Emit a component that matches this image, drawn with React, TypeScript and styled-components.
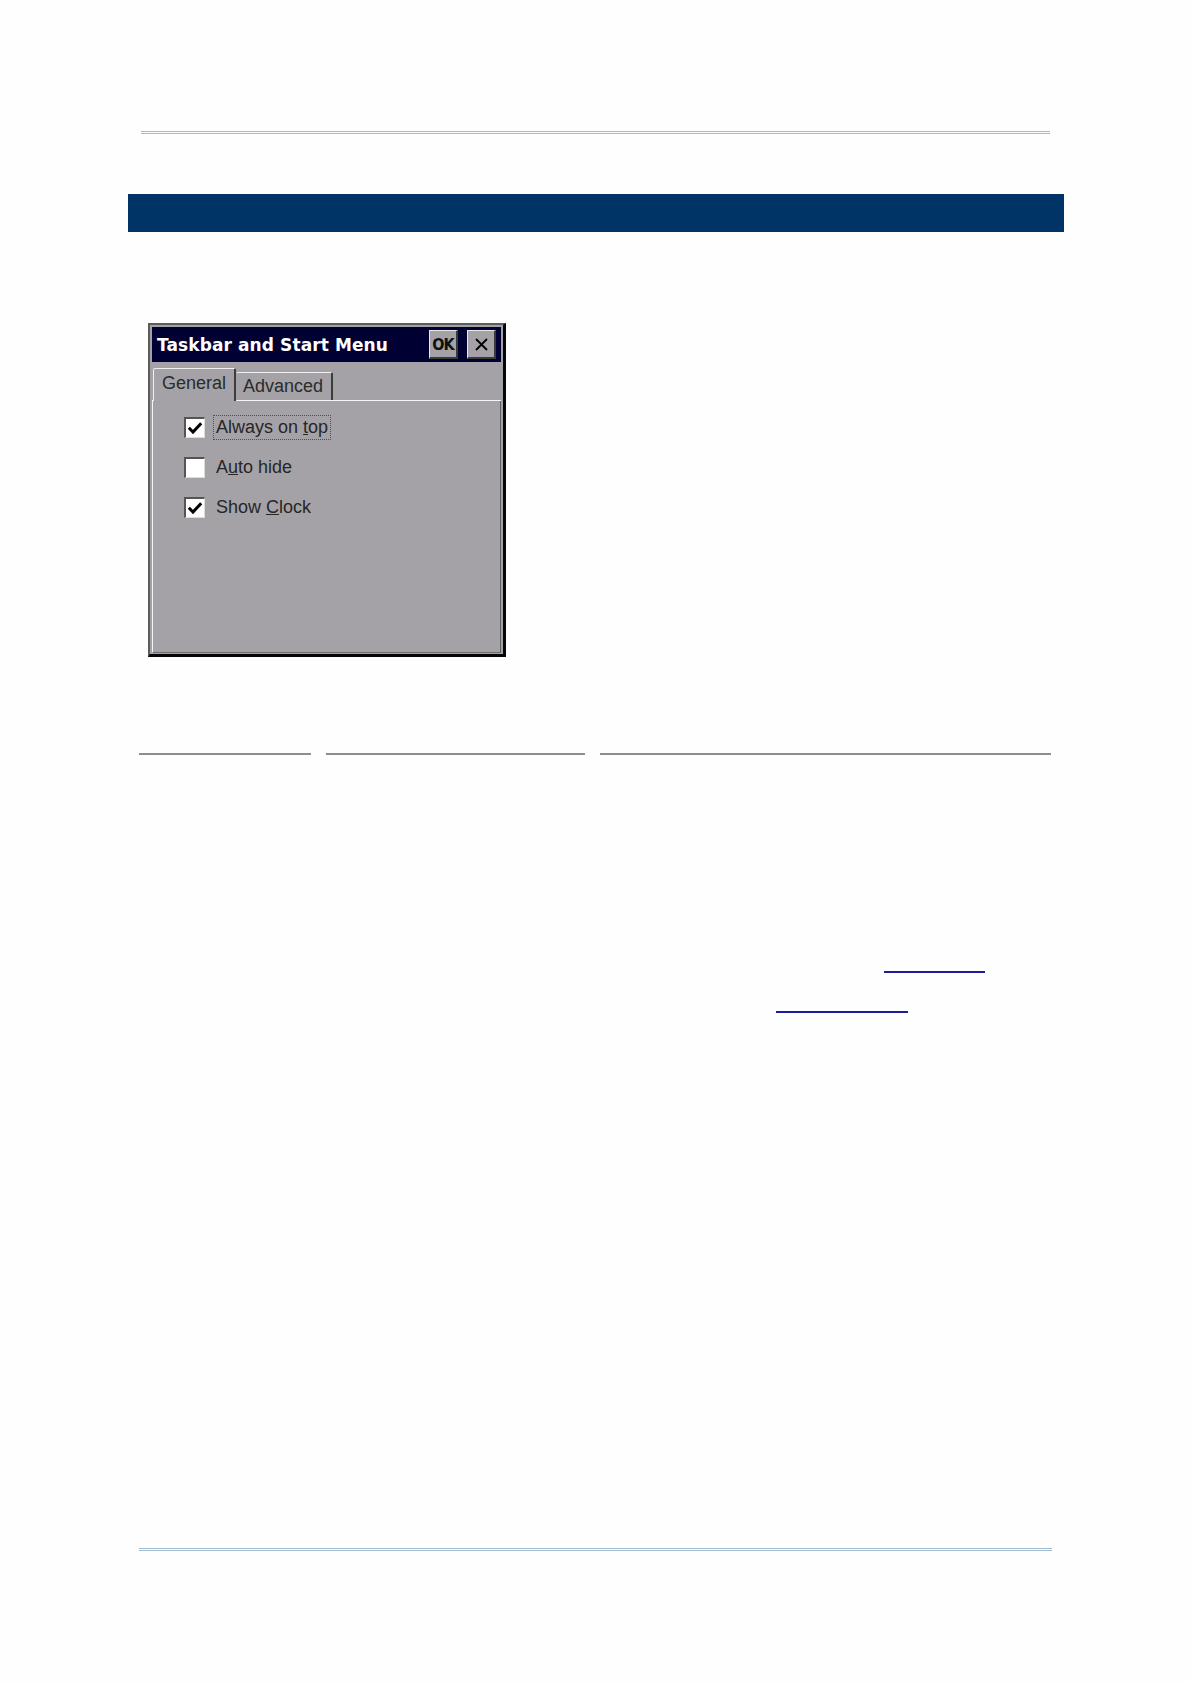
import React from "react";
import styled, { createGlobalStyle } from "styled-components";

const GlobalStyle = createGlobalStyle`
  html, body {
    margin: 0;
    padding: 0;
    background: #fefefe;
  }
  body {
    font-family: "Liberation Sans", Arial, sans-serif;
  }
`;

const Page = styled.div`
  width: 1190px;
  min-height: 1684px;
  display: flex;
  flex-direction: column;
  align-items: flex-start;
  overflow: hidden;
`;

const DoubleRule = styled.div<{ $top: number; $left: number; $width: number }>`
  margin-top: ${(p) => p.$top}px;
  margin-left: ${(p) => p.$left}px;
  width: ${(p) => p.$width}px;
  height: 1px;
  border-top: 1px solid #a2bacb;
  border-bottom: 1px solid #a2bacb;
`;

const Banner = styled.div`
  margin-top: 60px;
  margin-left: 128px;
  width: 936px;
  height: 38px;
  background: #003466;
`;

const Dialog = styled.div`
  margin-top: 91px;
  margin-left: 148px;
  width: 358px;
  height: 334px;
  box-sizing: border-box;
  border-style: solid;
  border-width: 2px 3px 3px 2px;
  border-color: #5c5c5c #050505 #050505 #5c5c5c;
  padding: 2px 2px 1px 2px;
  background: #a4a2a6;
  display: flex;
  flex-direction: column;
`;

const TitleBar = styled.div`
  height: 35px;
  background: #000033;
  display: flex;
  align-items: center;
  padding: 0 5px 0 5px;
  gap: 9px;
`;

const Title = styled.div`
  flex: 1;
  color: #ffffff;
  font-family: "DejaVu Sans", Verdana, sans-serif;
  font-weight: bold;
  font-size: 17px;
  letter-spacing: 0.1px;
  white-space: nowrap;
`;

const TitleButton = styled.button`
  width: 29px;
  height: 29px;
  padding: 0;
  box-sizing: border-box;
  background: #a4a2a6;
  border-style: solid;
  border-width: 1px 2px 2px 1px;
  border-color: #e8e8e8 #3a3a3a #3a3a3a #e8e8e8;
  display: flex;
  align-items: center;
  justify-content: center;
  font-family: "DejaVu Sans Condensed", "DejaVu Sans", sans-serif;
  font-weight: bold;
  font-size: 16px;
  letter-spacing: -1px;
  color: #111;
  overflow: hidden;
`;

const Body = styled.div`
  flex: 1;
  display: flex;
  flex-direction: column;
  padding-top: 6px;
`;

const TabStrip = styled.div`
  display: flex;
  align-items: flex-end;
  padding-left: 1px;
  border-bottom: 1px solid #f4f4f4;
  position: relative;
  z-index: 1;
`;

const Tab = styled.div<{ $active?: boolean }>`
  box-sizing: border-box;
  height: ${(p) => (p.$active ? 33 : 28)}px;
  margin-bottom: ${(p) => (p.$active ? -1 : 0)}px;
  width: ${(p) => (p.$active ? 83 : 97)}px;
  padding: ${(p) => (p.$active ? "4px 0 0 8px" : "3px 0 0 6px")};
  background: #a4a2a6;
  border-style: solid;
  border-width: 1px 2px 0 1px;
  border-color: #f0f0f0 #3c3c3c transparent ${(p) => (p.$active ? "#f0f0f0" : "transparent")};
  border-radius: 2px 2px 0 0;
  font-size: 18px;
  color: #2b2b2b;
  white-space: nowrap;
`;

const Panel = styled.div`
  flex: 1;
  box-sizing: border-box;
  border-left: 1px solid #f4f4f4;
  border-right: 1px solid #5e5e5e;
  border-bottom: 1px solid #6e6e6e;
  padding: 16px 0 0 31px;
  display: flex;
  flex-direction: column;
  gap: 19px;
`;

const OptionRow = styled.label`
  display: flex;
  align-items: center;
  gap: 8px;
  height: 21px;
`;

const Box = styled.span`
  width: 21px;
  height: 21px;
  box-sizing: border-box;
  background: #ffffff;
  border-style: solid;
  border-width: 2px 1px 1px 2px;
  border-color: #555555 #dcdcdc #dcdcdc #555555;
  display: flex;
  align-items: center;
  justify-content: center;
`;

const Label = styled.span<{ $focused?: boolean }>`
  font-size: 18px;
  color: #262626;
  padding: 1px 2px;
  border: 1px ${(p) => (p.$focused ? "dotted #505050" : "solid transparent")};
  white-space: nowrap;
`;

const ColumnRules = styled.div`
  margin-top: 96px;
  margin-left: 139px;
  display: grid;
  grid-template-columns: 172px 259px 451px;
  column-gap: 15px;
`;

const ColumnRule = styled.div`
  height: 2px;
  background: #8e8e8e;
`;

const LinkLine = styled.div<{ $top: number; $left: number; $width: number }>`
  margin-top: ${(p) => p.$top}px;
  margin-left: ${(p) => p.$left}px;
  width: ${(p) => p.$width}px;
  height: 2px;
  background: #1c1c9a;
`;

const Check = () => (
  <svg width="16" height="14" viewBox="0 0 16 14">
    <path d="M1.8 6.8 L6 11 L14.2 2.2" fill="none" stroke="#000" strokeWidth="3" />
  </svg>
);

const Close = () => (
  <svg width="15" height="15" viewBox="0 0 15 15">
    <path d="M2 2 L13 13 M13 2 L2 13" stroke="#000" strokeWidth="1.8" />
  </svg>
);

const options = [
  { key: "top", checked: true, focused: true, content: <>Always on <u>t</u>op</> },
  { key: "hide", checked: false, focused: false, content: <>A<u>u</u>to hide</> },
  { key: "clock", checked: true, focused: false, content: <>Show <u>C</u>lock</> },
];

export default function App() {
  return (
    <>
      <GlobalStyle />
      <Page>
        <DoubleRule $top={131} $left={141} $width={909} />
        <Banner />
        <Dialog>
          <TitleBar>
            <Title>Taskbar and Start Menu</Title>
            <TitleButton>OK</TitleButton>
            <TitleButton>
              <Close />
            </TitleButton>
          </TitleBar>
          <Body>
            <TabStrip>
              <Tab $active>General</Tab>
              <Tab>Advanced</Tab>
            </TabStrip>
            <Panel>
              {options.map((o) => (
                <OptionRow key={o.key}>
                  <Box>{o.checked && <Check />}</Box>
                  <Label $focused={o.focused}>{o.content}</Label>
                </OptionRow>
              ))}
            </Panel>
          </Body>
        </Dialog>
        <ColumnRules>
          <ColumnRule />
          <ColumnRule />
          <ColumnRule />
        </ColumnRules>
        <LinkLine $top={216} $left={884} $width={101} />
        <LinkLine $top={38} $left={776} $width={132} />
        <DoubleRule $top={535} $left={139} $width={913} />
      </Page>
    </>
  );
}
